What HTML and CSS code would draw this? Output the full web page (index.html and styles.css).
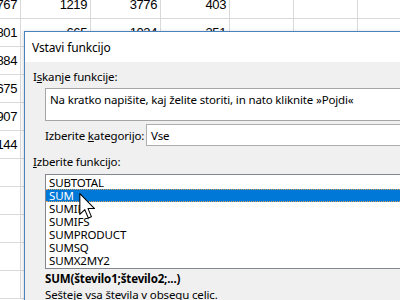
FILE: index.html
```html
<!DOCTYPE html>
<html lang="sl">
<head>
    <meta charset="UTF-8">
    <title>Vstavi funkcijo</title>
    <link rel="stylesheet" href="styles.css">
</head>
<body>
    <div class="sheet">
        <div class="cell">767</div><div class="cell">1219</div><div class="cell">3776</div><div class="cell">403</div><div class="cell"></div><div class="cell"></div><div class="cell"></div>
        <div class="cell">801</div><div class="cell">665</div><div class="cell">1024</div><div class="cell">351</div><div class="cell"></div><div class="cell"></div><div class="cell"></div>
        <div class="cell">884</div><div class="cell">512</div><div class="cell">2210</div><div class="cell">198</div><div class="cell"></div><div class="cell"></div><div class="cell"></div>
        <div class="cell">675</div><div class="cell">930</div><div class="cell">1870</div><div class="cell">277</div><div class="cell"></div><div class="cell"></div><div class="cell"></div>
        <div class="cell">907</div><div class="cell">1102</div><div class="cell">2954</div><div class="cell">366</div><div class="cell"></div><div class="cell"></div><div class="cell"></div>
        <div class="cell">144</div><div class="cell">388</div><div class="cell">1230</div><div class="cell">120</div><div class="cell"></div><div class="cell"></div><div class="cell"></div>
        <div class="cell"></div><div class="cell"></div><div class="cell"></div><div class="cell"></div><div class="cell"></div><div class="cell"></div><div class="cell"></div>
        <div class="cell"></div><div class="cell"></div><div class="cell"></div><div class="cell"></div><div class="cell"></div><div class="cell"></div><div class="cell"></div>
        <div class="cell"></div><div class="cell"></div><div class="cell"></div><div class="cell"></div><div class="cell"></div><div class="cell"></div><div class="cell"></div>
        <div class="cell"></div><div class="cell"></div><div class="cell"></div><div class="cell"></div><div class="cell"></div><div class="cell"></div><div class="cell"></div>
        <div class="cell"></div><div class="cell"></div><div class="cell"></div><div class="cell"></div><div class="cell"></div><div class="cell"></div><div class="cell"></div>
    </div>

    <div class="dialog">
        <div class="titlebar">Vstavi funkcijo</div>
        <div class="dlg-body">
            <div class="label">I<u>s</u>kanje funkcije:</div>
            <div class="search">Na kratko napišite, kaj želite storiti, in nato kliknite »Pojdi«</div>
            <div class="cat-row">
                <span class="cat-label">Izberite <u>k</u>ategorijo:</span>
                <div class="select">Vse</div>
            </div>
            <div class="label"><u>I</u>zberite funkcijo:</div>
            <ul class="func-list">
                <li>SUBTOTAL</li>
                <li class="selected">SUM</li>
                <li>SUMIF</li>
                <li>SUMIFS</li>
                <li>SUMPRODUCT</li>
                <li>SUMSQ</li>
                <li>SUMX2MY2</li>
            </ul>
            <div class="syntax">SUM(število1;število2;...)</div>
            <div class="desc">Sešteje vsa števila v obsegu celic.</div>
        </div>
    </div>

    <svg class="cursor" width="16" height="26" viewBox="0 0 12 20">
        <path d="M0.5 0.5 V16.5 L4.3 12.8 L7 19.2 L9.4 18.2 L6.8 12 H11.8 Z" fill="#fff" stroke="#000" stroke-width="0.8" stroke-linejoin="round"/>
    </svg>
</body>
</html>
```

FILE: styles.css
```css
html, body {
    margin: 0;
    overflow: hidden;
    background: #ffffff;
}
body {
    width: 400px;
    height: 300px;
    position: relative;
}
.sheet {
    display: grid;
    grid-template-columns: 21px 70px 70px 69px 64px 64px 64px;
    grid-auto-rows: 28px;
    margin-top: -9px;
    font-family: "Liberation Sans", Arial, sans-serif;
    font-size: 13px;
    letter-spacing: -0.4px;
    color: #000;
}
.cell {
    box-sizing: border-box;
    border-right: 1px solid #d9d9d9;
    border-bottom: 1px solid #d9d9d9;
    display: flex;
    align-items: center;
    justify-content: flex-end;
    padding-right: 3px;
    overflow: hidden;
    white-space: nowrap;
}
.dialog {
    position: absolute;
    left: 24px;
    top: 31px;
    width: 450px;
    height: 320px;
    border: 1px solid #4a82c0;
    background: #f0f0f0;
    box-shadow: -1px 0 3px rgba(0, 0, 0, 0.15);
    font-family: "Noto Sans", "Segoe UI", sans-serif;
    font-size: 11.5px;
    letter-spacing: -0.15px;
    color: #000;
    white-space: nowrap;
}
.titlebar {
    height: 30px;
    background: #ffffff;
    display: flex;
    align-items: center;
    padding-left: 7px;
    font-size: 12px;
}
.dlg-body {
    padding: 7px 0 0 8px;
    display: flex;
    flex-direction: column;
}
.label {
    line-height: 16px;
}
.search {
    margin: 3px 0 0 12px;
    border: 1px solid #a5a5a5;
    background: #ffffff;
    padding: 3px 4px 0;
    box-sizing: border-box;
    height: 33px;
    line-height: 16px;
}
.cat-row {
    margin: 3px 0 0 12px;
    display: flex;
    align-items: center;
}
.cat-label {
    flex-shrink: 0;
    width: 101px;
    line-height: 16px;
    padding-top: 2px;
}
.select {
    flex: 1;
    height: 22px;
    box-sizing: border-box;
    border: 1px solid #adadad;
    background: #ffffff;
    display: flex;
    align-items: center;
    padding-left: 4px;
}
.cat-row + .label {
    margin-top: 8px;
}
.func-list {
    list-style: none;
    margin: 4px 0 0 12px;
    padding: 1px 0 1px;
    border: 1px solid #828790;
    background: #ffffff;
}
.func-list li {
    height: 13px;
    line-height: 13px;
    padding-left: 3px;
    box-sizing: border-box;
}
.func-list li.selected {
    background: #0078d7;
    color: #ffffff;
    border-top: 1px dotted #d9a25a;
    border-bottom: 1px dotted #d9a25a;
    line-height: 11px;
}
.syntax {
    margin: 2px 0 0 12px;
    font-weight: bold;
    line-height: 16px;
}
.desc {
    margin-left: 12px;
    line-height: 16px;
}
.cursor {
    position: absolute;
    left: 79px;
    top: 193px;
}
```
